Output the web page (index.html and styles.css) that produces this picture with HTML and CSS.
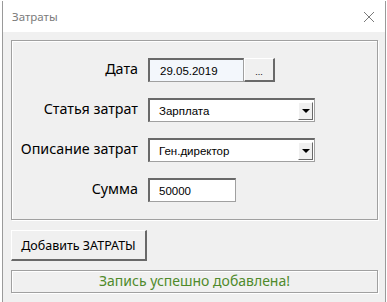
FILE: index.html
```html
<!DOCTYPE html>
<html lang="ru">

<head>
    <meta charset="UTF-8">
    <meta name="viewport" content="width=device-width, initial-scale=1.0">
    <title>Затраты</title>
    <link rel="stylesheet" href="styles.css">
</head>

<body>
    <div class="window">
        <!-- Заголовок окна -->
        <div class="titlebar">
            <span class="title">Затраты</span>
            <svg class="close" width="12" height="12" viewBox="0 0 12 12">
                <path d="M1 1 L11 11 M11 1 L1 11" stroke="#7a7a7a" stroke-width="1" fill="none" />
            </svg>
        </div>

        <div class="content">
            <div class="frame">
                <label class="field-label">Дата</label>
                <div class="date-group">
                    <div class="input date-input">29.05.2019</div>
                    <button class="btn small-btn">...</button>
                </div>

                <label class="field-label">Статья затрат</label>
                <div class="input combo">
                    <span class="combo-text">Зарплата</span>
                    <span class="combo-btn"><span class="arrow"></span></span>
                </div>

                <label class="field-label">Описание затрат</label>
                <div class="input combo">
                    <span class="combo-text">Ген.директор</span>
                    <span class="combo-btn"><span class="arrow"></span></span>
                </div>

                <label class="field-label">Сумма</label>
                <div class="input sum-input">50000</div>
            </div>

            <button class="btn add-btn">Добавить ЗАТРАТЫ</button>

            <div class="status">Запись успешно добавлена!</div>
        </div>
    </div>
</body>

</html>
```

FILE: styles.css
```css
/* Окно формы */
body {
    margin: 0;
    background-color: #ffffff;
    font-family: "Liberation Sans", Arial, sans-serif;
    padding-left: 2px;
}

.window {
    width: 382px;
    height: 301px;
    margin-top: 1px;
    border-left: 1px solid #9a9a9a;
    border-right: 1px solid #9a9a9a;
    display: flex;
    flex-direction: column;
}

.titlebar {
    height: 31px;
    background-color: #ffffff;
    display: flex;
    align-items: center;
    justify-content: space-between;
    padding: 0 10px 0 9px;
}

.title {
    font-family: "Noto Sans", sans-serif;
    font-size: 11.5px;
    color: #7b7b7b;
}

.content {
    flex: 1;
    background-color: #f0f0f0;
    padding: 8px 7px 0 8px;
}

/* Рамка с полями */
.frame {
    height: 180px;
    box-sizing: border-box;
    border: 1px solid #a0a0a0;
    box-shadow: inset 1px 1px 0 #ffffff, 1px 1px 0 #ffffff;
    padding: 17px 0 0 0;
    display: grid;
    grid-template-columns: 126px auto;
    column-gap: 10px;
    row-gap: 16px;
    align-items: center;
    align-content: start;
}

.field-label {
    text-align: right;
    font-family: "Noto Sans", sans-serif;
    font-size: 14.3px;
    color: #000000;
    margin-top: -4px;
}

.input {
    height: 24px;
    box-sizing: border-box;
    background-color: #ffffff;
    border-top: 2px solid #696969;
    border-left: 2px solid #696969;
    border-right: 1px solid #a0a0a0;
    border-bottom: 1px solid #a0a0a0;
    font-family: "Liberation Sans", Tahoma, sans-serif;
    font-size: 11.5px;
    display: flex;
    align-items: center;
    padding-left: 9px;
}

.date-group {
    display: flex;
}

.date-input {
    width: 96px;
    background-color: #f3f7fc;
    padding-left: 10px;
}

.btn {
    background-color: #f0f0f0;
    border-top: 1px solid #ffffff;
    border-left: 1px solid #ffffff;
    border-right: 2px solid #696969;
    border-bottom: 2px solid #696969;
    padding: 0;
    font-family: "Liberation Sans", Tahoma, sans-serif;
    color: #000000;
}

.small-btn {
    width: 31px;
    height: 24px;
    font-size: 9px;
    padding-top: 4px;
}

.combo {
    width: 167px;
    justify-content: space-between;
    padding-right: 1px;
}

.combo-btn {
    width: 15px;
    height: 18px;
    box-sizing: border-box;
    background-color: #f0f0f0;
    border-top: 1px solid #ffffff;
    border-left: 1px solid #ffffff;
    border-right: 1px solid #696969;
    border-bottom: 1px solid #696969;
    display: flex;
    align-items: center;
    justify-content: center;
}

.arrow {
    width: 0;
    height: 0;
    border-left: 4px solid transparent;
    border-right: 4px solid transparent;
    border-top: 4px solid #000000;
}

.sum-input {
    width: 88px;
}

/* Кнопка и строка статуса */
.add-btn {
    display: block;
    margin-top: 10px;
    width: 136px;
    height: 31px;
    font-size: 12.5px;
    font-family: "Noto Sans", sans-serif;
}

.status {
    margin-top: 9px;
    height: 23px;
    box-sizing: border-box;
    border: 1px solid #a0a0a0;
    box-shadow: inset 1px 1px 0 #ffffff, 1px 1px 0 #ffffff;
    text-align: center;
    font-family: "Noto Sans", sans-serif;
    font-size: 14px;
    line-height: 20px;
    color: #4f8a2b;
}
```
